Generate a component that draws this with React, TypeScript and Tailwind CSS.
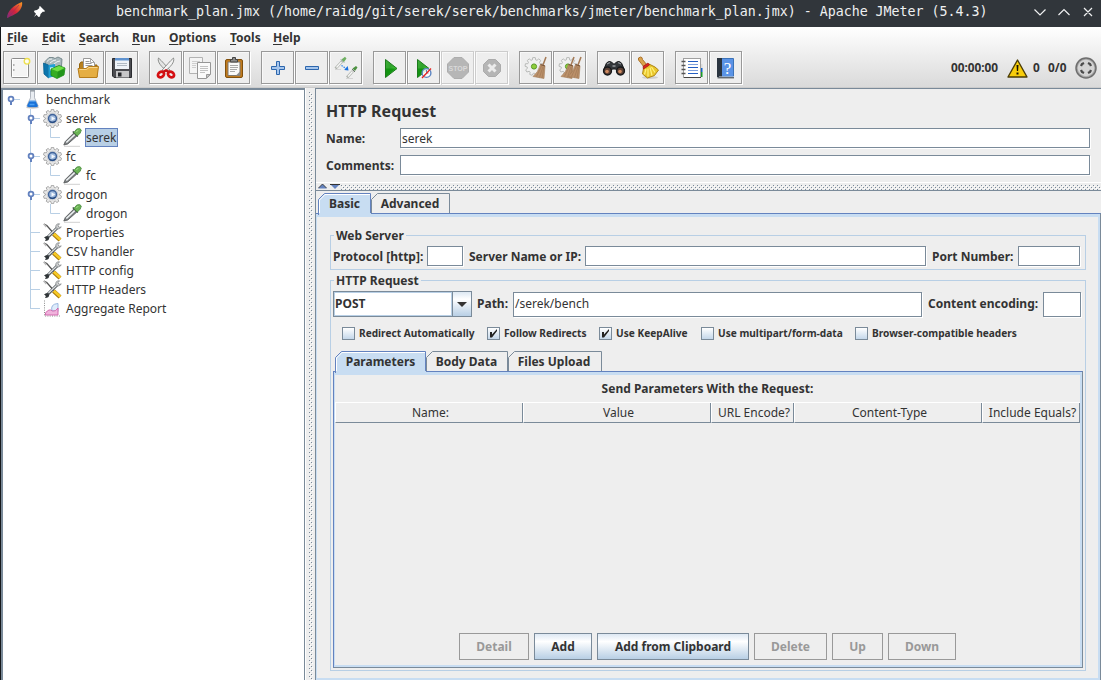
import type { ReactNode } from 'react';

const FONT = "font-['Noto_Sans',sans-serif]";

function gearPath(cx: number, cy: number, outer: number, inner: number, teeth: number) {
  const pts: string[] = [];
  const step = (Math.PI * 2) / teeth;
  for (let i = 0; i < teeth; i++) {
    const a = i * step;
    for (const [r, d] of [[inner, -0.36], [outer, -0.2], [outer, 0.2], [inner, 0.36]]) {
      pts.push(`${(cx + r * Math.sin(a + d * step)).toFixed(2)} ${(cy - r * Math.cos(a + d * step)).toFixed(2)}`);
    }
  }
  return `M${pts.join('L')}z`;
}

/* ---------- toolbar glyphs (24 x 24 grid) ---------- */
function Ico({ children }: { children: ReactNode }) {
  return (
    <svg width="24" height="24" viewBox="0 0 24 24" fill="none" className="block shrink-0">
      {children}
    </svg>
  );
}
const NewIcon = () => (
  <Ico>
    <rect x="3.500" y="2.500" width="17" height="19" rx="1" fill="#f4f4f4" stroke="#8c8c8c" />
    <rect x="4.500" y="3.500" width="15" height="17" stroke="#fff" />
    <path d="M5 9h1.500M5 14h1.500" stroke="#999" strokeWidth="1.500" />
    <circle cx="19" cy="5.300" r="2.800" fill="#fffef0" fillOpacity=".9" stroke="#eee04c" strokeWidth="1.300" />
  </Ico>
);
const TemplatesIcon = () => (
  <Ico>
    <path d="M3 5.500l4-4h4l2 1 3-1.500 4 2-.5 7-8 1-8-1z" fill="#a9b8bc" stroke="#64787e" strokeWidth=".8" />
    <path d="M5 5.500q2-3 5-2.500M8 7q3-3 6-3M12 8q3-3 6-3" stroke="#eef3f3" />
    <path d="M1.500 7l5 2v13l-4.500-4z" fill="#0b75ad" stroke="#085f8e" strokeWidth=".8" />
    <path d="M6.500 9l6.500-1v12l-6.500 2z" fill="#1fa0d6" />
    <path d="M8 11.500l3.500-.5v3L8 14.500z" fill="#cdeefa" />
    <path d="M9 13l8-3.500 6 2.500-1 7-7 3.500-6-3z" fill="#35ad22" stroke="#1b8a17" strokeWidth=".8" />
    <path d="M9.500 13l6 2.500 7-3.500-5.500-2z" fill="#6fe044" />
    <path d="M15.500 16v6l6-3 .8-6z" fill="#22941a" />
  </Ico>
);
const OpenIcon = () => (
  <Ico>
    <path d="M3.500 8l1.500-2h4l1 3h11v12H3.500z" fill="#b9811f" stroke="#94640d" />
    <path d="M7.500 2.500h7l4 4v7h-11z" fill="#fff" stroke="#999" />
    <path d="M14.500 2.500v4h4" stroke="#aaa" />
    <path d="M9.500 5.500h4M9.500 7.500h6M9.500 9.500h7" stroke="#999" />
    <path d="M2 12.500h8l2.500-2h10l-1.500 11H3.500z" fill="#e5ae43" stroke="#b67d1c" />
    <path d="M3.500 13.500h7l2.500-2h8.500" stroke="#f8d68c" />
  </Ico>
);
const SaveIcon = () => (
  <Ico>
    <path d="M2.500 2.500h19v19H4l-1.500-1.500z" fill="#4b4c51" stroke="#2b2c30" />
    <path d="M5 2h14v11H5z" fill="#eef3f8" />
    <path d="M5 2h14v2.500H5z" fill="#5e92cf" />
    <path d="M7 7.500h10M7 9.500h10" stroke="#b0bac4" />
    <path d="M6 15h13v6.500H6z" fill="#c6c6c8" />
    <path d="M8 16.500h3.500v4H8z" fill="#25262a" />
  </Ico>
);
const CutIcon = () => (
  <Ico>
    <path d="M4.500 2c-1.500 4 3 9 9.500 14l1.800-2C12 10 8 5 4.500 2z" fill="#e4e5e4" stroke="#8c8e8c" />
    <path d="M19.500 2c1.500 4-3 9-9.500 14l-1.800-2C12 10 16 5 19.500 2z" fill="#f3f3f3" stroke="#8c8e8c" />
    <ellipse cx="7" cy="18.500" rx="3.300" ry="2.500" transform="rotate(-35 7 18.500)" stroke="#d40f12" strokeWidth="2.700" />
    <ellipse cx="17" cy="18.500" rx="3.300" ry="2.500" transform="rotate(35 17 18.500)" stroke="#d40f12" strokeWidth="2.700" />
    <path d="M9 16l3-1.500 3 1.500" stroke="#c91115" strokeWidth="2.500" />
  </Ico>
);
const CopyIcon = () => (
  <Ico>
    <path d="M1.500 1.500h13v16h-13z" fill="#f4f4f4" stroke="#b2b2b2" />
    <path d="M4 5.500h8M4 7.500h8M4 9.500h4M4 11.500h4" stroke="#cfcfcf" />
    <path d="M9.500 6.500h13v12l-4 4h-9z" fill="#fafafa" stroke="#969696" />
    <path d="M12 10.500h8M12 12.500h8M12 14.500h8M12 16.500h5" stroke="#c2c2c2" />
    <path d="M18.500 22l3.500-3.500h-3.500z" fill="#ccc" stroke="#999" />
  </Ico>
);
const PasteIcon = () => (
  <Ico>
    <rect x="3.500" y="3.500" width="17" height="18" rx="1.500" fill="#c07a1d" stroke="#80500e" />
    <path d="M6 6h12v13.500H6z" fill="#fafafa" stroke="#80796e" />
    <path d="M8.500 5.500v-2h2v-2h3v2h2v2.500h-7z" fill="#8a8a8a" stroke="#444" />
    <path d="M8 9.500h8M8 11.500h8M8 13.500h7M8 15.500h5" stroke="#aaa" />
    <path d="M18 15.500v4h-4z" fill="#8b8b8b" />
  </Ico>
);
const PlusIcon = () => (
  <Ico>
    <path d="M10.500 5.500h3v5h5v3h-5v5h-3v-5h-5v-3h5z" fill="#a5c5ec" stroke="#2d66ad" />
  </Ico>
);
const MinusIcon = () => (
  <Ico>
    <path d="M5.500 10.500h13v3h-13z" fill="#a5c5ec" stroke="#2d66ad" />
  </Ico>
);
const ToggleIcon = () => (
  <Ico>
    <path d="M1.500 12.500l6.500-7" stroke="#b0b4ae" strokeWidth="2.600" />
    <path d="M2.500 11.500l5-5.500" stroke="#f7f7f7" strokeWidth="1.300" />
    <path d="M7 3.500l3 3" stroke="#7a857a" />
    <path d="M7.500 3.500l2.500 2.500 2.500-3.500-1.500-1.700z" fill="#6fb062" />
    <path d="M1 13.500h6" stroke="#d4d4d4" />
    <path d="M7.500 9.500l4.500 3" stroke="#368aed" strokeWidth="1.300" strokeDasharray="1.500 1" />
    <path d="M14.500 14.500l-.8-4.500-3.500 4z" fill="#1a70df" />
    <path d="M13 21.500l6-6.500" stroke="#b0b4ae" strokeWidth="2.600" />
    <path d="M14 20.500l4.500-5" stroke="#f7f7f7" strokeWidth="1.300" />
    <path d="M18 13l3 3" stroke="#6b756b" />
    <path d="M18.500 12.500l2.500 2.500 2.500-3.500-1.500-1.500z" fill="#4d9142" />
    <path d="M12 22.500h7" stroke="#d4d4d4" />
  </Ico>
);
const PlayShape = ({ id }: { id: string }) => (
  <>
    <defs>
      <linearGradient id={id} x1="0" y1="0" x2="1" y2=".6">
        <stop offset="0" stopColor="#3fae3a" /><stop offset=".5" stopColor="#2fa32b" /><stop offset="1" stopColor="#43c93b" />
      </linearGradient>
    </defs>
    <path d="M7.500 3.500L19 12.500 7.500 21.500z" fill={`url(#${id})`} stroke="#1c7a1c" />
    <path d="M8 12.500h10L8 20.500z" fill="#0a8d0a" fillOpacity=".75" />
  </>
);
const StartIcon = () => <Ico><PlayShape id="playA" /></Ico>;
const StartNoTimersIcon = () => (
  <Ico>
    <g transform="translate(-2 0)"><PlayShape id="playB" /></g>
    <circle cx="14.500" cy="17" r="4.400" fill="#fff" fillOpacity=".85" stroke="#5b85c2" strokeWidth="1.400" />
    <path d="M14.500 17v-3M14.500 17h2" stroke="#6488b6" />
    <path d="M10 22l9-9.500" stroke="#e52421" strokeWidth="1.300" />
  </Ico>
);
const StopIcon = () => (
  <Ico>
    <path d="M8 1.500h8l6.500 6.500v8l-6.500 6.500h-8l-6.500-6.500v-8z" fill="#b6b6b6" stroke="#adadad" />
    <text x="12" y="15" textAnchor="middle" fill="#d9d9d9" fontSize="7" fontWeight="700" fontFamily="Liberation Sans, sans-serif">STOP</text>
  </Ico>
);
const ShutdownIcon = () => (
  <Ico>
    <path d="M8.500 3.500h7l5 5v7l-5 5h-7l-5-5v-7z" fill="#b5b5b5" stroke="#ababab" />
    <path d="M8.500 8.500l7 7M15.500 8.500l-7 7" stroke="#ececec" strokeWidth="3" />
  </Ico>
);
const Broom = ({ x = 0 }: { x?: number }) => (
  <g transform={`translate(${x} 0)`}>
    <path d="M21 1l-3 8" stroke="#a47a55" strokeWidth="1.500" />
    <path d="M15.500 8.500l4.500 1.500-1 12.500-11-2q5-4 7.500-12z" fill="#bb9069" stroke="#a17a58" strokeWidth=".6" />
    <path d="M16.500 10l-5 10.500M18 10.500l-3.500 11M19 11l-2 11" stroke="#a07a58" strokeWidth=".7" />
    <path d="M15.500 8.500l4.500 1.500" stroke="#7b5638" strokeWidth="1.300" />
  </g>
);
const SmallGear = () => (
  <>
    <path d={gearPath(10, 10.5, 9, 6.8, 9)} fill="#f0f0f0" stroke="#b9bbb9" />
    <circle cx="10" cy="10.500" r="2.600" fill="#8fce3c" stroke="#5a9a2a" />
  </>
);
const ClearIcon = () => <Ico><SmallGear /><Broom x={1} /></Ico>;
const ClearAllIcon = () => <Ico><SmallGear /><Broom x={-5} /><Broom x={2} /></Ico>;
const SearchIcon = () => (
  <Ico>
    <path d="M1.500 14l3-7q2-2.500 5-1l2 2h1l2-2q3-1.500 5 1l3 7-6 2-3-3h-3l-3 3z" fill="#34383c" stroke="#151719" />
    <path d="M5 8l3-1.500M16 6.500L19 8M10.500 10h3" stroke="#94989c" strokeWidth="1.300" />
    <circle cx="5.500" cy="15" r="3.900" fill="#5b4035" stroke="#17191b" strokeWidth="1.500" />
    <circle cx="18.500" cy="15" r="3.900" fill="#5b4035" stroke="#17191b" strokeWidth="1.500" />
    <circle cx="5" cy="15.500" r="1.800" fill="#cf8a60" />
    <circle cx="18" cy="15.500" r="1.800" fill="#cf8a60" />
  </Ico>
);
const ResetIcon = () => (
  <Ico>
    <ellipse cx="14" cy="21.500" rx="8" ry="1.500" fill="#bbb" fillOpacity=".6" />
    <path d="M2.500 4q-1-2.500 2-3 2 0 2 2.500l4.500 5.500-3 2z" fill="#d9a24c" stroke="#a76b20" strokeWidth=".9" />
    <path d="M13 8l6 3 3.500 3-4 5.500-7 2.500-5-4 1-6z" fill="#e9c62c" stroke="#a67d0c" strokeWidth=".9" />
    <path d="M10 13l-1.500 5.500M12 12.500l0 8M14 11.500l2 8M15.500 11l3.500 5.500" stroke="#fff27c" strokeWidth="1.200" />
    <path d="M7 10.500l5-3.500 1.500 2-6 4z" fill="#d82621" stroke="#a71914" strokeWidth=".8" />
  </Ico>
);
const LogIcon = () => (
  <Ico>
    <path d="M20 8h2.500v5H20z" fill="#ddd" /><path d="M20 12h2.500v4H20z" fill="#1463cb" /><path d="M20 16h2.500v5H20z" fill="#199d28" />
    <rect x="3.500" y="2.500" width="17" height="19" fill="#fff" stroke="#a0a0a0" />
    <path d="M4 21.500h17" stroke="#444" />
    <path d="M1.500 5.500h4M1.500 9.500h4M1.500 13.500h4M1.500 17.500h4" stroke="#555" strokeWidth="1.700" />
    <path d="M8 5.500h10M8 11.500h10M8 17.500h10" stroke="#245ec2" />
    <path d="M8 8.500h10M8 14.500h10" stroke="#7d9fdc" />
  </Ico>
);
const HelpIcon = () => (
  <Ico>
    <path d="M3.500 2.500h16v18h-16z" fill="#5a93e6" stroke="#3d73b8" />
    <path d="M3 2h5v19H3z" fill="#2b3540" />
    <path d="M5 21h15" stroke="#e3e8ee" /><path d="M3.500 21.800h16.500" stroke="#27313b" />
    <text x="13.500" y="17.500" textAnchor="middle" fill="#fff" fontSize="17" fontFamily="Liberation Serif, serif">?</text>
  </Ico>
);

type Tool = { icon: () => ReactNode; name: string; off?: boolean };
const toolGroups: Tool[][] = [
  [{ icon: NewIcon, name: 'new' }, { icon: TemplatesIcon, name: 'templates' }, { icon: OpenIcon, name: 'open' }, { icon: SaveIcon, name: 'save' }],
  [{ icon: CutIcon, name: 'cut' }, { icon: CopyIcon, name: 'copy' }, { icon: PasteIcon, name: 'paste' }],
  [{ icon: PlusIcon, name: 'expand' }, { icon: MinusIcon, name: 'collapse' }, { icon: ToggleIcon, name: 'toggle' }],
  [{ icon: StartIcon, name: 'start' }, { icon: StartNoTimersIcon, name: 'start-no-timers' }, { icon: StopIcon, name: 'stop', off: true }, { icon: ShutdownIcon, name: 'shutdown', off: true }],
  [{ icon: ClearIcon, name: 'clear' }, { icon: ClearAllIcon, name: 'clear-all' }],
  [{ icon: SearchIcon, name: 'search' }, { icon: ResetIcon, name: 'reset' }],
  [{ icon: LogIcon, name: 'log' }, { icon: HelpIcon, name: 'help' }],
];

function TitleBar() {
  return (
    <header className="flex h-[27px] shrink-0 items-start bg-[#31363b] text-[#eff0f1]">
      <svg width="50" height="27" viewBox="0 0 50 27" className="shrink-0">
        <defs>
          <linearGradient id="feather" x1="0" y1="1" x2="1" y2="0">
            <stop offset="0" stopColor="#70308a" /><stop offset=".45" stopColor="#d3223d" /><stop offset="1" stopColor="#f79a22" />
          </linearGradient>
        </defs>
        <path d="M7 18c0-7 7-13 15-16 1 4-2 9-5 11-3 2-6 3-8 4z" fill="url(#feather)" />
        <path d="M7.500 18L19 5" stroke="#a32855" strokeWidth=".7" />
        <path d="M40 6l5 5-1 1-1-.5-2.500 2.500-.5 2.500-1.500.5-2-2.200L34 17l2-3.300-2-2 .5-1.200 2.500-.5L39.500 8 39 7z" fill="#fff" />
      </svg>
      <h1 className="w-[925px] pl-[66px] font-['DejaVu_Sans_Mono',monospace] text-[13.290px] leading-[24px] font-normal whitespace-pre">benchmark_plan.jmx (/home/raidg/git/serek/serek/benchmarks/jmeter/benchmark_plan.jmx) - Apache JMeter (5.4.3)</h1>
      <svg width="126" height="27" viewBox="975 0 126 27" fill="none" stroke="#eff0f1" strokeWidth="1.200" className="shrink-0">
        <path d="M1034.500 9.500l5.500 5.500 5.500-5.500M1058.500 15l5.500-5.500 5.500 5.500M1084 8l8 8M1092 8l-8 8" />
      </svg>
    </header>
  );
}

function Toolbar() {
  return (
    <div className="flex h-[37px] pt-px pl-[2px]">
      <div className="flex gap-[11px]">
        {toolGroups.map((g, i) => (
          <div key={i} className="flex gap-px">
            {g.map(({ icon: Icon, name, off }) => (
              <div key={name} className={`flex size-[33px] border bg-[#eee] pt-[4px] pl-[4px] shadow-[inset_1px_1px_0_#f8f8f8,1px_1px_0_#fff] ${off ? 'border-[#ccc]' : 'border-[#999]'}`}>
                <Icon />
              </div>
            ))}
          </div>
        ))}
      </div>
      <div className="ml-auto flex h-[34px] items-center pr-[4px] text-[11.800px] font-bold text-[#333]">
        <span className="w-[56px] shrink-0">00:00:00</span>
        <svg width="21" height="19" viewBox="0 0 21 19" className="block shrink-0">
          <path d="M10.500 1L20 18H1z" fill="#f8cd0b" stroke="#4b3c05" strokeWidth="1.400" strokeLinejoin="round" />
          <path d="M9.500 6h2l-.4 6H9.900zM9.500 13.500h2v2h-2z" fill="#171300" />
        </svg>
        <span className="w-[20px] shrink-0 pl-[5px]">0</span>
        <span className="w-[27px] shrink-0">0/0</span>
        <svg width="22" height="22" viewBox="0 0 22 22" className="block shrink-0">
          <circle cx="11" cy="11" r="10" fill="#a8a8a8" stroke="#6e6e6e" strokeWidth="1.500" />
          <circle cx="11" cy="11" r="8.300" fill="#d4d4d4" />
          <path d="M6 9l1-2 2-1M13 6l2 1 1 2M16 13l-1 2-2 1M9 16l-2-1-1-2" stroke="#4a4a4a" strokeWidth="2.300" fill="none" />
        </svg>
      </div>
    </div>
  );
}

/* ---------- tree ---------- */
const FlaskIcon = () => (
  <svg width="14" height="19" viewBox="0 0 14 19">
    <ellipse cx="6.500" cy="17.500" rx="6.500" ry="1.200" fill="#ccc" />
    <path d="M4.500 .8v7L1 15.500q-.3 2 1.500 2h8q1.800 0 1.500-2L8.500 7.800v-7z" fill="#e9edf2" stroke="#a9b0b9" strokeWidth=".9" />
    <path d="M4 .8h5" stroke="#8f979f" strokeWidth="1.200" />
    <path d="M3.500 10.800h6l2.300 4.700q.2 1.500-1.200 1.500H2.500Q1 17 1.200 15.500z" fill="#1a72d8" />
    <path d="M3.300 11h6.400" stroke="#7ab7f2" />
    <path d="M3.500 14.500h5" stroke="#4ba0f5" strokeWidth="1.500" />
  </svg>
);
const treeGear = gearPath(9.5, 9.5, 9.2, 7.2, 10);
const GearIcon = () => (
  <svg width="20" height="19" viewBox="0 0 20 19">
    <path d={treeGear} fill="#e9e9e9" stroke="#979797" strokeWidth=".8" />
    <circle cx="9.500" cy="9.500" r="5.400" fill="#dde3ea" stroke="#bbb" strokeWidth=".6" />
    <circle cx="9.500" cy="9.500" r="4" fill="#9db8dc" stroke="#40639a" strokeWidth="1.500" />
    <path d="M8.500 7.300l3.800 2.200-3.800 2.200z" fill="#f2f7fd" />
    <path d="M6.500 12.500q3 2 6-.5" stroke="#274b82" strokeWidth="1.300" fill="none" />
  </svg>
);
const DropperIcon = () => (
  <svg width="20" height="19" viewBox="0 0 20 19">
    <path d="M1 18.300h16" stroke="#d0d0d0" />
    <path d="M.8 17l1.500-3.500 8.500-8.500 3 3-9 8z" fill="#7b7f81" stroke="#505456" strokeWidth=".8" />
    <path d="M3.300 14.500l8.500-8" stroke="#eef2f3" strokeWidth="1.600" />
    <path d="M9.800 3.500l5 5" stroke="#33413a" strokeWidth="1.300" />
    <path d="M10.800 4.500l3-3.500q3.500-1.500 4.500 1l-1 3-3 3z" fill="#6bb455" stroke="#4a8a3f" strokeWidth=".8" />
    <path d="M13.300 4l2-2" stroke="#a8e08f" />
  </svg>
);
const ToolsIcon = () => (
  <svg width="20" height="19" viewBox="0 0 20 19">
    <path d="M.8 1l3 1.500 7 8" stroke="#555" strokeWidth="1.300" fill="none" />
    <path d="M.8 1l2.500 3" stroke="#bbb" strokeWidth="1.500" />
    <path d="M10.500 11l6.500 6" stroke="#a87a0d" strokeWidth="4.200" />
    <path d="M10.800 10.800l6.500 6" stroke="#f7ca26" strokeWidth="2.600" />
    <path d="M3 16L14.500 4.500" stroke="#4f5559" strokeWidth="3" />
    <path d="M5.500 13L14.500 4.500" stroke="#dfe2e4" strokeWidth="1.300" />
    <path d="M16.500 .8q-4-.3-3.700 3.700 2.500 3 5.500-.5l-2.300.3-1-1.600z" fill="#cfd1d2" stroke="#84888a" strokeWidth=".8" />
    <path d="M1 14.500l2 1.300-1 2.200q4.200 0 4.200-3-1.500-3-5.200-.5z" fill="#303538" />
  </svg>
);
const ReportIcon = () => (
  <svg width="20" height="19" viewBox="0 0 20 19">
    <path d="M1.500 1.500v15.500H17" stroke="#8a8a8a" strokeDasharray="1 1.300" fill="none" />
    <path d="M9 12q-2-7 6-7.500v8z" fill="#dfecfb" stroke="#8fb0dc" strokeWidth=".9" />
    <path d="M2.500 14q3.500-5 7-2 3 1 5.500-3v7H2.500z" fill="#f0b3dc" stroke="#cf5fa8" strokeWidth=".9" />
  </svg>
);

type Node = { label: string; level: 0 | 1 | 2; icon: () => ReactNode; handle?: boolean; last?: boolean; selected?: boolean };
const nodes: Node[] = [
  { label: 'benchmark', level: 0, icon: FlaskIcon, handle: true },
  { label: 'serek', level: 1, icon: GearIcon, handle: true },
  { label: 'serek', level: 2, icon: DropperIcon, selected: true },
  { label: 'fc', level: 1, icon: GearIcon, handle: true },
  { label: 'fc', level: 2, icon: DropperIcon },
  { label: 'drogon', level: 1, icon: GearIcon, handle: true },
  { label: 'drogon', level: 2, icon: DropperIcon },
  { label: 'Properties', level: 1, icon: ToolsIcon },
  { label: 'CSV handler', level: 1, icon: ToolsIcon },
  { label: 'HTTP config', level: 1, icon: ToolsIcon },
  { label: 'HTTP Headers', level: 1, icon: ToolsIcon },
  { label: 'Aggregate Report', level: 1, icon: ReportIcon, last: true },
];
const gutters = [21, 39, 59];

function TreeRow({ label, level, icon: Icon, handle, last, selected }: Node) {
  const w = gutters[level];
  const hx = level === 0 ? 9 : 29;
  return (
    <div className="flex h-[19px] items-center">
      <svg width={w} height="19" viewBox={`1 0 ${w} 19`} fill="none" className="shrink-0">
        {level > 0 && <path d={`M28.500 0V${last ? 10 : 19}`} stroke="#b8cfe5" />}
        {level === 1 && <path d="M28.500 9.500H38" stroke="#b8cfe5" />}
        {level === 2 && <path d="M48.500 0V9.500H58" stroke="#b8cfe5" />}
        {handle && (
          <>
            <path d={`M${hx} 9.500h9`} stroke="#b8cfe5" />
            <path d={`M${hx} 10v5`} stroke="#6382bf" strokeWidth="2" />
            <circle cx={hx} cy="9" r="2.400" fill="#fff" stroke="#6382bf" strokeWidth="1.800" />
          </>
        )}
      </svg>
      <span className={level === 0 ? 'flex w-[21px] pl-[2px]' : 'flex w-[23px] pl-px'}><Icon /></span>
      <span className={`h-[19px] border pr-px text-[12px] leading-[17px] whitespace-nowrap text-[#333] ${selected ? 'border-[#6382bf] bg-[#b8cfe5]' : 'border-transparent'}`}>{label}</span>
    </div>
  );
}

/* ---------- form pieces ---------- */
function Bumps({ id, className }: { id: string; className: string }) {
  return (
    <svg className={className} shapeRendering="crispEdges">
      <defs>
        <pattern id={id} width="4" height="4" patternUnits="userSpaceOnUse">
          <path d="M0 0h1v1H0zM2 2h1v1H2z" fill="#7a8a99" />
          <path d="M1 1h1v1H1zM3 3h1v1H3z" fill="#fff" />
        </pattern>
      </defs>
      <rect width="100%" height="100%" fill={`url(#${id})`} />
    </svg>
  );
}
function Field({ className, value = '' }: { className: string; value?: string }) {
  return (
    <div className={`flex shrink-0 items-center border border-[#7a8a99] bg-white pl-px text-[12px] text-[#333] shadow-[1px_1px_0_#fff] ${className}`}>{value}</div>
  );
}
function Lbl({ className, children }: { className: string; children: ReactNode }) {
  return <span className={`shrink-0 text-[12px] leading-[18px] font-bold whitespace-nowrap text-[#333] ${className}`}>{children}</span>;
}
function Tab({ label, width, active, nudge = '' }: { label: string; width: number; active?: boolean; nudge?: string }) {
  const stroke = active ? '#6382bf' : '#7a8a99';
  return (
    <div className={`relative flex shrink-0 items-center justify-center text-[12px] font-bold text-[#333] ${active ? 'z-10 h-[22px] pb-px' : 'h-[20px]'}`} style={{ width }}>
      <svg className="absolute inset-0" width={width} height={active ? 22 : 20} fill={active ? '#c8ddf2' : '#eee'}>
        <path d={`M.5 22V6.500L6.500 .5H${width - 0.5}V${active ? 20 : 22}`} stroke={stroke} />
        {active && <path d={`M1.500 20V7L7 1.500H${width - 1}`} stroke="#fff" fill="none" />}
        {active && <path d={`M1 20h${width - 1}v2H1z`} />}
      </svg>
      <span className={`relative ${nudge}`}>{label}</span>
    </div>
  );
}
function Check({ label, width, checked }: { label: string; width: number; checked?: boolean }) {
  return (
    <div className="flex shrink-0 items-center gap-[4px] text-[10.150px] font-bold whitespace-nowrap text-[#333]" style={{ width }}>
      <span className="flex size-[13px] shrink-0 items-center justify-center border border-[#7a8a99] bg-linear-to-b from-white to-[#c4d7ea]">
        {checked && (
          <svg width="9" height="9" viewBox="0 0 9 9"><path d="M1 3h2v2.500L8 0v2L3 8.500H1z" fill="#222" /></svg>
        )}
      </span>
      {label}
    </div>
  );
}
function Btn({ label, width, on }: { label: string; width: number; on?: boolean }) {
  return (
    <button style={{ width }} className={`flex h-[27px] items-center justify-center border text-[12px] font-bold ${on ? 'border-[#7a8a99] bg-linear-to-b from-[#dde8f3] via-white via-30% to-[#b8cfe5] text-[#333]' : 'border-[#999] bg-[#eee] text-[#999]'}`}>{label}</button>
  );
}
const columns: [string, string][] = [
  ['Name:', 'w-[188px]'], ['Value', 'w-[188px]'], ['URL Encode?', 'w-[83px]'], ['Content-Type', 'w-[188px]'], ['Include Equals?', 'w-[98px]'],
];

function RequestPanel() {
  return (
    <section className="flex h-[592px] w-[786px] flex-col border-t border-l border-[#7a8a99] bg-[#eee]">
      <div className="flex h-[93px] flex-col pt-[11px] pl-[10px]">
        <h2 className="h-[28px] text-[16px] leading-[23px] font-bold text-[#333]">HTTP Request</h2>
        <div className="flex h-[27px] items-start">
          <Lbl className="w-[74px] pt-[2px]">Name:</Lbl><Field className="h-[20px] w-[690px] pt-px" value="serek" />
        </div>
        <div className="flex h-[27px] items-start">
          <Lbl className="w-[74px] pt-[2px]">Comments:</Lbl><Field className="h-[20px] w-[690px]" />
        </div>
      </div>
      <div className="flex h-[9px] shrink-0 items-start border-t border-b border-t-white border-b-[#7a8a99]">
        <svg width="25" height="7" viewBox="0 0 25 7" className="shrink-0">
          <path d="M2 5.500L6.500 1 11 5.500z" fill="#6382bf" /><path d="M2.500 5L6.500 1 10.500 5" stroke="#333" strokeWidth=".9" fill="none" />
          <path d="M14 1h10l-5 5z" fill="#6382bf" /><path d="M14 1.500h10" stroke="#333" />
        </svg>
        <Bumps id="bumpsH" className="mt-[2px] h-[5px] w-[760px]" />
      </div>
      <div className="-mb-[2px] flex shrink-0 pt-[2px] pl-[2px]">
        <Tab label="Basic" width={53} active /><Tab label="Advanced" width={79} nudge="pt-px pr-px" />
      </div>
      <div className="flex min-h-0 flex-1 flex-col border-t border-r border-t-[#6382bf] border-r-[#7a8a99]">
        <div className="flex flex-1 flex-col border-t-[3px] border-r-2 border-b-2 border-l border-[#c8ddf2] pt-[10px] pl-[13px]">
          <fieldset className="h-[43px] w-[756px] shrink-0 border border-[#b8cfe5] pl-[2px]">
            <legend className="ml-px h-[16px] px-[2px] text-[12px] leading-[18px] font-bold text-[#333]">Web Server</legend>
            <div className="flex items-center pt-[3px]">
              <Lbl className="w-[94px] pt-[2px]">Protocol [http]:</Lbl><Field className="h-[20px] w-[36px]" />
              <Lbl className="w-[122px] pt-[2px] pl-[6px]">Server Name or IP:</Lbl><Field className="h-[20px] w-[341px]" />
              <Lbl className="w-[92px] pt-[2px] pl-[6px]">Port Number:</Lbl><Field className="h-[20px] w-[62px]" />
            </div>
          </fieldset>
          <fieldset className="mt-[2px] h-[399px] w-[756px] shrink-0 border border-[#b8cfe5] pl-[2px]">
            <legend className="ml-px h-[16px] px-[2px] text-[12px] leading-[18px] font-bold text-[#333]">HTTP Request</legend>
            <div className="flex items-center pt-[3px]">
              <div className="flex h-[26px] w-[139px] border border-[#7a8a99] bg-white text-[12px] font-bold text-[#333]">
                <span className="flex-1 border border-[#b8cfe5] leading-[22px]">POST</span>
                <span className="flex w-[19px] items-center justify-center border-l border-[#7a8a99] bg-linear-to-b from-[#dde8f3] via-white via-30% to-[#b8cfe5]">
                  <svg width="10" height="5"><path d="M0 0h10L5 5z" fill="#333" /></svg>
                </span>
              </div>
              <Lbl className="w-[41px] pl-[5px]">Path:</Lbl><Field className="h-[25px] w-[409px]" value="/serek/bench" />
              <Lbl className="w-[121px] pl-[6px]">Content encoding:</Lbl><Field className="h-[25px] w-[38px]" />
            </div>
            <div className="flex h-[34px] items-center pb-px pl-[9px]">
              <Check label="Redirect Automatically" width={145} />
              <Check label="Follow Redirects" width={112} checked />
              <Check label="Use KeepAlive" width={102} checked />
              <Check label="Use multipart/form-data" width={154} />
              <Check label="Browser-compatible headers" width={170} />
            </div>
            <div className="-mb-[2px] flex pl-[2px]">
              <Tab label="Parameters" width={91} active /><Tab label="Body Data" width={82} nudge="pt-px pr-px" /><Tab label="Files Upload" width={94} nudge="pt-px pr-[2px]" />
            </div>
            <div className="h-[297px] w-[750px] border border-[#6382bf] border-r-[#7a8a99] border-b-[#7a8a99]">
              <div className="flex h-full flex-col border-t-[3px] border-r-2 border-b-2 border-l border-[#c8ddf2]">
                <div className="h-[27px] text-center text-[12px] leading-[27px] font-bold text-[#333]">Send Parameters With the Request:</div>
                <div className="flex h-[21px] border-t border-white">
                  {columns.map(([c, w]) => (
                    <div key={c} className={`flex shrink-0 items-center justify-center border-r border-b border-l border-r-[#7a8a99] border-b-[#7a8a99] border-l-white pl-[3px] text-[12px] text-[#333] ${w}`}>{c}</div>
                  ))}
                </div>
                <div className="mt-auto flex justify-center gap-[5px] pb-[5px]">
                  <Btn label="Detail" width={70} /><Btn label="Add" width={58} on /><Btn label="Add from Clipboard" width={152} on />
                  <Btn label="Delete" width={73} /><Btn label="Up" width={51} /><Btn label="Down" width={68} />
                </div>
              </div>
            </div>
          </fieldset>
        </div>
      </div>
    </section>
  );
}

export default function App() {
  return (
    <div className={`flex h-[680px] w-[1101px] flex-col overflow-hidden bg-[#eee] ${FONT}`}>
      <TitleBar />
      <div className="flex flex-1 flex-col border-l border-[#15171a]">
        <div className="h-[61px] shrink-0 border-b border-[#ccc] bg-linear-to-b from-white to-[#dadada]">
          <nav className="flex h-[23px] text-[12px] leading-[22px] font-bold text-[#333]">
            {[['File', 'w-[35px]'], ['Edit', 'w-[37px]'], ['Search', 'w-[53px]'], ['Run', 'w-[37px]'], ['Options', 'w-[61px]'], ['Tools', 'w-[43px]'], ['Help', 'w-[40px]']].map(([m, w], i) => (
              <span key={m} className={`${w} ${i === 0 ? 'ml-[6px]' : ''}`}><span className="underline underline-offset-2">{m[0]}</span>{m.slice(1)}</span>
            ))}
          </nav>
          <Toolbar />
        </div>
        <div className="flex flex-1">
          <aside className="h-[592px] w-[304px] border-t-2 border-r border-l-2 border-[#7a8a99] bg-white">
            {nodes.map((n, i) => <TreeRow key={i} {...n} />)}
          </aside>
          <div className="flex w-[10px] justify-center border-l border-white pt-[4px]"><Bumps id="bumpsV" className="h-[588px] w-[4px]" /></div>
          <RequestPanel />
        </div>
      </div>
    </div>
  );
}
